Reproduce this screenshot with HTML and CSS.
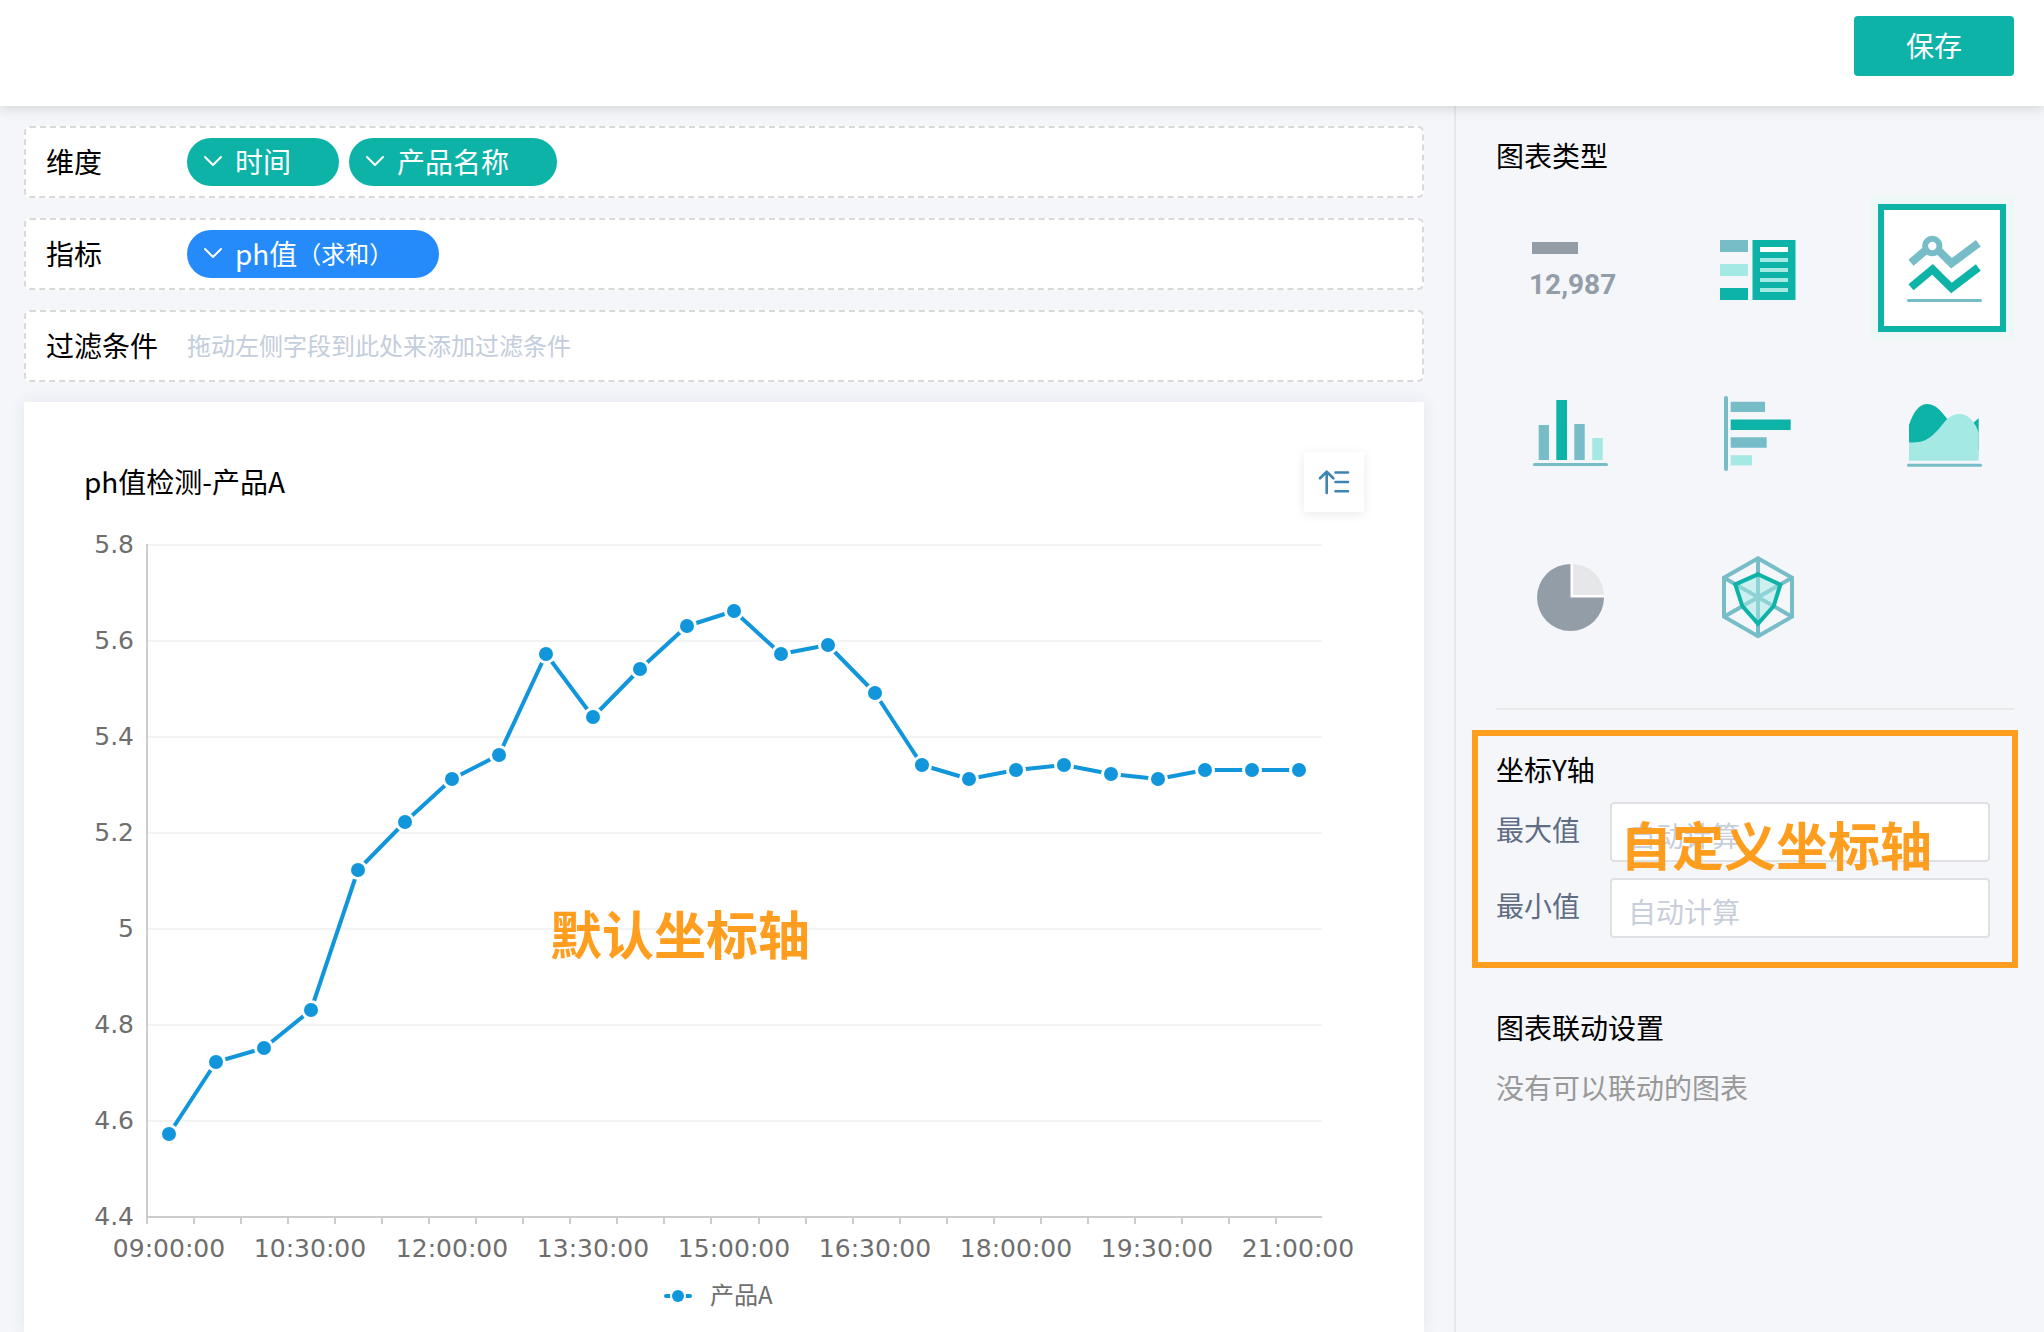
FILE: index.html
```html
<!DOCTYPE html>
<html lang="zh-CN">
<head>
<meta charset="utf-8">
<meta name="viewport" content="width=device-width, initial-scale=1">
<title>ph值检测-产品A</title>
<link rel="stylesheet" href="styles.css">
</head>
<body>
<header class="topbar">
  <button class="save" type="button">保存</button>
</header>
<div class="layout">
  <main class="editor">
    <section class="shelf">
      <h2 class="shelf-label">维度</h2>
      <div class="pills">
        <button class="pill" type="button"><svg class="chevron" viewBox="0 0 20 20"><path d="M2 6l8 8 8-8"/></svg>时间</button>
        <button class="pill" type="button"><svg class="chevron" viewBox="0 0 20 20"><path d="M2 6l8 8 8-8"/></svg>产品名称</button>
      </div>
    </section>
    <section class="shelf">
      <h2 class="shelf-label">指标</h2>
      <div class="pills">
        <button class="pill pill-measure" type="button"><svg class="chevron" viewBox="0 0 20 20"><path d="M2 6l8 8 8-8"/></svg>ph值<small class="aggregate">（求和）</small></button>
      </div>
    </section>
    <section class="shelf">
      <h2 class="shelf-label">过滤条件</h2>
      <p class="hint">拖动左侧字段到此处来添加过滤条件</p>
    </section>
    <section class="card">
      <div class="card-head">
        <h2 class="card-title">ph值检测-产品A</h2>
        <button class="sort" type="button" aria-label="排序">
          <svg class="sort-icon" viewBox="0 0 60 60"><path d="M22.7 41V20M16 26.3l6.7-6.6 6.7 6.6M31.5 20.5h12.5M31.5 30h12.5M31.5 39.3h12.5"/></svg>
        </button>
      </div>
      <svg class="chart" viewBox="0 0 1280 820" role="img" aria-label="ph值检测-产品A">
        <defs>
          <marker id="dot" viewBox="-10 -10 20 20" markerWidth="20" markerHeight="20" markerUnits="userSpaceOnUse">
            <circle class="dot-ring" r="10"/><circle class="dot" r="7"/>
          </marker>
        </defs>
        <path class="grid" d="M64 33H1238M64 129H1238M64 225H1238M64 321H1238M64 417H1238M64 513H1238M64 609H1238"/>
        <path class="axis" d="M63 32V712M62 705H1238M110 705v7M157 705v7M204 705v7M251 705v7M298 705v7M345 705v7M392 705v7M439 705v7M486 705v7M533 705v7M580 705v7M627 705v7M675 705v7M722 705v7M769 705v7M816 705v7M863 705v7M910 705v7M957 705v7M1004 705v7M1051 705v7M1098 705v7M1145 705v7M1192 705v7"/>
        <g class="tick tick-y">
          <text x="50" y="41">5.8</text><text x="50" y="137">5.6</text><text x="50" y="233">5.4</text><text x="50" y="329">5.2</text><text x="50" y="425">5</text><text x="50" y="521">4.8</text><text x="50" y="617">4.6</text><text x="50" y="713">4.4</text>
        </g>
        <g class="tick tick-x">
          <text x="85" y="745">09:00:00</text><text x="226" y="745">10:30:00</text><text x="368" y="745">12:00:00</text><text x="509" y="745">13:30:00</text><text x="650" y="745">15:00:00</text><text x="791" y="745">16:30:00</text><text x="932" y="745">18:00:00</text><text x="1073" y="745">19:30:00</text><text x="1214" y="745">21:00:00</text>
        </g>
        <polyline class="series" points="85,622 132,550 180,536 227,498 274,358 321,310 368,267 415,243 462,142 509,205 556,157 603,114 650,99 697,142 744,133 791,181 838,253 885,267 932,258 980,253 1027,262 1074,267 1121,258 1168,258 1215,258"/>
        <path class="series-key" d="M582 784H606"/>
        <circle class="dot-ring" cx="594" cy="784" r="8"/><circle class="dot" cx="594" cy="784" r="6"/>
        <text class="legend" x="626" y="792">产品A</text>
        <text class="note" x="466" y="443">默认坐标轴</text>
      </svg>
    </section>
  </main>
  <aside class="settings">
    <h2 class="heading">图表类型</h2>
    <div class="types">
      <button class="type" type="button" aria-label="指标卡"><svg class="type-icon" viewBox="28 28 88 88"><rect class="gray" x="36" y="46" width="46" height="12"/><text class="figure" x="33" y="98">12,987</text></svg></button>
      <button class="type" type="button" aria-label="表格"><svg class="type-icon" viewBox="28 28 88 88"><path class="blue" d="M37 44h28v12H37z"/><path class="mint" d="M37 68h28v12H37z"/><path class="teal" d="M37 92h28v12H37zM69.500 44h43v60h-43z"/><path class="white" d="M77 51h28v5H77z"/><path class="mint" d="M77 62h28v4H77zM77 72h28v4H77zM77 82h28v4H77zM77 92h28v4H77z"/></svg></button>
      <button class="type type-selected" type="button" aria-label="折线图"><svg class="type-icon" viewBox="28 28 88 88"><path class="zigzag blue-line" d="M41 66.700L62.500 48.500 81.500 67.300 108.300 47.300"/><circle class="ring" cx="62.300" cy="50" r="7.200"/><path class="zigzag teal-line" d="M41 91.300L62.600 73.300 81.500 92 108.300 71.500"/><path class="base" d="M38.500 104.500h72"/></svg></button>
      <button class="type" type="button" aria-label="柱状图"><svg class="type-icon" viewBox="28 28 88 88"><path class="blue" d="M42.700 65H53v35H42.700zM78.300 64h10.400v36H78.300z"/><path class="teal" d="M60.300 40H71v60H60.300z"/><path class="mint" d="M96.300 78h10.400v22H96.300z"/><path class="base" d="M38.500 104.500h72"/></svg></button>
      <button class="type" type="button" aria-label="条形图"><svg class="type-icon" viewBox="28 28 88 88"><path class="blue" d="M47.700 41.700H82V52H47.700zM47.700 77.200h36v10.500h-36z"/><path class="teal" d="M47.700 59.400h60V70h-60z"/><path class="mint" d="M47.700 95.200H69v10.200H47.700z"/><path class="base base-v" d="M43 38v71"/></svg></button>
      <button class="type" type="button" aria-label="面积图"><svg class="type-icon" viewBox="28 28 88 88"><path class="teal" d="M39 65C44 50 50 44 57.300 44C67 44 73 54 79 61C86 69 96 69 103 63L108.700 58.300V90H39z"/><path class="mint" d="M39 82.300C59 84 65 73 76.700 59.500C84 51.700 96 51.700 103 61.500Q107 67 108.700 72.700V100.700H39z"/><path class="base" d="M38.500 105.300h72"/></svg></button>
      <button class="type" type="button" aria-label="饼图"><svg class="type-icon" viewBox="28 28 88 88"><path class="white" d="M74.500 40H77V71H108V73.500H74.500z"/><path class="gray" d="M74.500 73.500V40A33.500 33.500 0 1 0 108 73.500z"/><path class="pale" d="M77 71V40A31.500 31.500 0 0 1 108 71z"/></svg></button>
      <button class="type" type="button" aria-label="雷达图"><svg class="type-icon" viewBox="28 28 88 88"><path class="web" d="M75 34.300L109 53.700V92.700L75 112.300 41 92.700V53.700zM75 34.300V112.300M41 53.700L109 92.700M109 53.700L41 92.700"/><path class="shield" d="M75 50.300L97.300 60.700 90.700 82 75 99.700 59.300 82 52.300 60.300z"/></svg></button>
    </div>
    <hr class="divider">
    <section class="axis-form">
      <h2 class="heading">坐标Y轴</h2>
      <div class="field"><label class="field-label" for="max">最大值</label><input class="field-input" id="max" type="text" placeholder="自动计算"></div>
      <div class="field"><label class="field-label" for="min">最小值</label><input class="field-input" id="min" type="text" placeholder="自动计算"></div>
      <p class="callout">自定义坐标轴</p>
    </section>
    <section class="linkage">
      <h2 class="heading">图表联动设置</h2>
      <p class="empty">没有可以联动的图表</p>
    </section>
  </aside>
</div>
</body>
</html>
```
FILE: styles.css
```css
* { box-sizing: border-box; }

body {
  margin: 0;
  min-height: 100vh;
  display: flex;
  flex-direction: column;
  background: #f4f6fa;
  color: #000;
  font: 28px/40px "Noto Sans CJK SC", sans-serif;
}

h2, p { margin: 0; font-size: inherit; font-weight: 400; }
h2, p, label { padding-bottom: 2px; line-height: 38px; }
button, input { font: inherit; }
button { border: 0; padding: 0 0 2px; cursor: pointer; }
svg { display: block; }

.topbar {
  position: relative;
  display: flex;
  justify-content: flex-end;
  padding: 16px 30px 30px;
  background: #fff;
  box-shadow: 0 2px 12px rgba(0, 0, 0, 0.15);
}
.save {
  width: 160px;
  height: 60px;
  border-radius: 4px;
  background: #0eb3a8;
  color: #fff;
}

.layout { flex: 1; display: flex; }

.editor {
  flex: 1;
  min-width: 0;
  display: flex;
  flex-direction: column;
  gap: 20px;
  padding: 20px 30px 0 24px;
}
.shelf {
  display: flex;
  align-items: center;
  height: 72px;
  padding: 0 20px;
  border: 2px dashed #d9d9d9;
  border-radius: 6px;
  background: #fff;
}
.shelf-label { width: 141px; }
.pills { display: flex; gap: 10px; }
.pill {
  display: flex;
  align-items: center;
  height: 48px;
  padding: 0 48px 2px 16px;
  border-radius: 24px;
  background: #0eb3a8;
  color: #fff;
}
.pill-measure { padding-right: 46px; background: #258afa; }
.aggregate { font-size: 24px; }
.chevron {
  width: 20px;
  height: 20px;
  margin-right: 12px;
  fill: none;
  stroke: #fff;
  stroke-width: 2;
  stroke-linecap: round;
  stroke-linejoin: round;
}
.hint { color: #c3cddc; font-size: 24px; }

.card {
  flex: 1;
  padding: 50px 60px 0;
  background: #fff;
  box-shadow: 0 0 16px rgba(40, 50, 110, 0.08);
}
.card-head { display: flex; justify-content: space-between; align-items: center; }
.sort {
  width: 60px;
  height: 60px;
  padding: 0;
  background: #fff;
  box-shadow: 0 2px 10px rgba(40, 50, 90, 0.1);
}
.sort-icon {
  fill: none;
  stroke: #3e83b2;
  stroke-width: 2.6;
  stroke-linecap: round;
  stroke-linejoin: round;
}

.chart { width: 100%; }
.grid { fill: none; stroke: #f3f3f3; stroke-width: 2; }
.axis { fill: none; stroke: #ccc; stroke-width: 2; }
.tick { fill: #6e6e6e; font: 25px "DejaVu Sans", sans-serif; }
.tick-y { text-anchor: end; }
.tick-x { text-anchor: middle; }
.series {
  fill: none;
  stroke: #1296db;
  stroke-width: 4;
  stroke-linejoin: round;
  marker: url(#dot);
}
.series-key { stroke: #1296db; stroke-width: 4; stroke-linecap: round; }
.dot { fill: #1296db; }
.dot-ring { fill: #fff; }
.legend { fill: #6e6e6e; font-size: 24px; }
.note { fill: #ff9d1e; font-size: 52px; font-weight: 700; }

.settings {
  width: 590px;
  padding: 30px 30px 40px 40px;
  border-left: 2px solid #e6e8e8;
}
.types {
  display: grid;
  grid-template-columns: repeat(3, 144px);
  grid-auto-rows: 144px;
  justify-content: space-between;
  row-gap: 20px;
  margin-top: 20px;
}
.type {
  display: grid;
  place-content: center;
  margin: 8px;
  padding: 0;
  background: none;
}
.type-selected {
  border: 6px solid #0eb3a8;
  background: #fff;
  box-shadow: 0 0 0 8px #ecf7f6;
}
.type-icon { width: 88px; height: 88px; overflow: visible; }
.gray { fill: #939da8; }
.blue { fill: #76bdc8; }
.mint { fill: #a4e9e3; }
.teal { fill: #0eb3a8; }
.white { fill: #fff; }
.pale { fill: #e6e7e9; }
.figure { fill: #939da8; font: bold 28px Roboto, sans-serif; }
.zigzag { fill: none; stroke-width: 8; }
.blue-line { stroke: #76bdc8; }
.teal-line { stroke: #0eb3a8; }
.ring { fill: #fff; stroke: #76bdc8; stroke-width: 6; }
.base { fill: none; stroke: #76bdc8; stroke-width: 3; stroke-linecap: round; }
.base-v { stroke-width: 4; }
.web { fill: none; stroke: #76bdc8; stroke-width: 4; }
.shield { fill: rgba(164, 233, 227, 0.5); stroke: #0eb3a8; stroke-width: 4; }

.divider { width: 100%; height: 2px; margin: 40px 0 20px; border: 0; background: #e6eae8; }

.axis-form {
  position: relative;
  display: flex;
  flex-direction: column;
  gap: 16px;
  margin: 0 -4px 0 -24px;
  padding: 14px 22px 24px 18px;
  border: 6px solid #ff9d1e;
}
.axis-form .heading { margin-bottom: -4px; }
.field { display: flex; align-items: center; }
.field-label { width: 114px; padding-bottom: 6px; color: #5f6c82; }
.field-input {
  flex: 1;
  min-width: 0;
  height: 60px;
  padding: 6px 16px 0;
  border: 2px solid #e0e1e3;
  border-radius: 4px;
  background: #fff;
}
.field-input::placeholder { color: #c8ceda; opacity: 1; }
.callout {
  position: absolute;
  left: 142px;
  top: 78px;
  color: #ff9d1e;
  font-size: 52px;
  font-weight: 700;
  line-height: 60px;
  pointer-events: none;
}

.linkage { display: flex; flex-direction: column; gap: 20px; margin-top: 40px; }
.empty { color: #999; }
```
